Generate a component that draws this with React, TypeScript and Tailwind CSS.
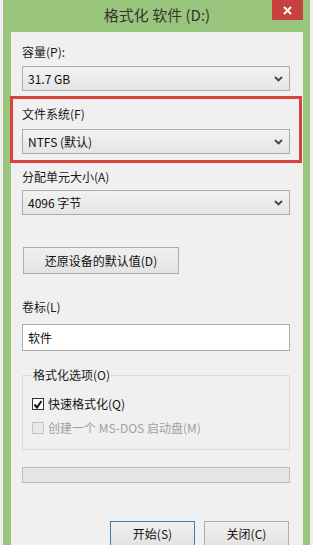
import type { ReactNode } from "react";

const font = { fontFamily: '"Noto Sans CJK SC", "Noto Sans", sans-serif' };

function Chevron() {
  return (
    <svg width="9" height="6" viewBox="0 0 9 6" className="shrink-0">
      <polyline points="1,1 4.5,4.5 8,1" fill="none" stroke="#444" strokeWidth="1.8" />
    </svg>
  );
}

function Select({ value }: { value: string }) {
  return (
    <div className="flex h-[25px] items-center justify-between border border-[#acacac] bg-gradient-to-b from-[#f2f2f2] to-[#e5e5e5] pl-[5px] pr-[6px] text-[12px] text-[#111]">
      <span>{value}</span>
      <Chevron />
    </div>
  );
}

function Label({ children, className = "" }: { children: ReactNode; className?: string }) {
  return <p className={`h-4 text-[12px] leading-4 text-[#1a1a1a] ${className}`}>{children}</p>;
}

function Button({ children, className = "" }: { children: ReactNode; className?: string }) {
  return (
    <button
      className={`flex items-center justify-center border bg-gradient-to-b from-[#f0f0f0] to-[#e3e3e3] text-[12px] text-[#111] ${className}`}
    >
      {children}
    </button>
  );
}

export default function App() {
  return (
    <div className="h-[545px] w-[313px] overflow-hidden bg-[#eeeeee] px-[3px]" style={font}>
      <div className="flex h-full flex-col bg-[#9ac57c] pl-[8px] pr-[7px]">
        {/* title bar */}
        <div className="grid h-[32px] shrink-0 grid-cols-[31px_1fr_31px]">
          <div />
          <p className="pt-[5px] text-center text-[15px] leading-5 text-[#333]">格式化 软件 (D:)</p>
          <div className="flex h-[20px] items-center justify-center bg-[#c8413e]">
            <svg width="9" height="9" viewBox="0 0 9 9">
              <path d="M1 1 L8 8 M8 1 L1 8" stroke="#fff" strokeWidth="2" />
            </svg>
          </div>
        </div>

        <div className="flex-1 bg-[#f0f0f0] pl-[11px] pr-[13px] pt-[12px]">
          <Label>容量(P):</Label>
          <div className="mt-[6px]">
            <Select value="31.7 GB" />
          </div>

          <div className="-ml-[12px] -mr-[12px] mt-[5px] border-[3px] border-[#d8413c] px-[9px] pb-[6px] pt-[7px]">
            <Label>文件系统(F)</Label>
            <div className="mt-[7px]">
              <Select value="NTFS (默认)" />
            </div>
          </div>

          <Label className="mt-[6px]">分配单元大小(A)</Label>
          <div className="mt-[5px]">
            <Select value="4096 字节" />
          </div>

          <Button className="ml-px mt-[32px] h-[27px] w-[156px] border-[#acacac]">还原设备的默认值(D)</Button>

          <Label className="mt-[25px]">卷标(L)</Label>
          <div className="mt-[9px] flex h-[27px] items-center border border-[#abadb3] bg-white pl-[5px] text-[12px] text-[#111]">
            软件
          </div>

          <fieldset className="mt-[16px] h-[83px] border border-[#dcdcdc] px-[9px]">
            <legend className="px-px text-[12px] leading-4 text-[#1a1a1a]">格式化选项(O)</legend>
            <div className="mt-[13px] flex h-4 items-center gap-[4px]">
              <span className="flex h-[12px] w-[12px] items-center justify-center border border-[#333] bg-white">
                <svg width="10" height="9" viewBox="0 0 10 9">
                  <polyline points="1.5,4.5 4,7.5 8.5,1" fill="none" stroke="#111" strokeWidth="2" />
                </svg>
              </span>
              <span className="text-[12px] text-[#111]">快速格式化(Q)</span>
            </div>
            <div className="mt-[8px] flex h-4 items-center gap-[4px]">
              <span className="h-[12px] w-[12px] border border-[#c4c4c4] bg-[#e8e8e8]" />
              <span className="text-[12px] text-[#a0a0a0]">创建一个 MS-DOS 启动盘(M)</span>
            </div>
          </fieldset>

          <div className="mt-[17px] h-[16px] border border-[#bcbcbc] bg-[#e6e6e6]" />

          <div className="mt-[38px] flex justify-end gap-[9px] pr-px">
            <Button className="h-[26px] w-[85px] border-[#3c7fb1]">开始(S)</Button>
            <Button className="h-[26px] w-[85px] border-[#acacac]">关闭(C)</Button>
          </div>
        </div>
      </div>
    </div>
  );
}
